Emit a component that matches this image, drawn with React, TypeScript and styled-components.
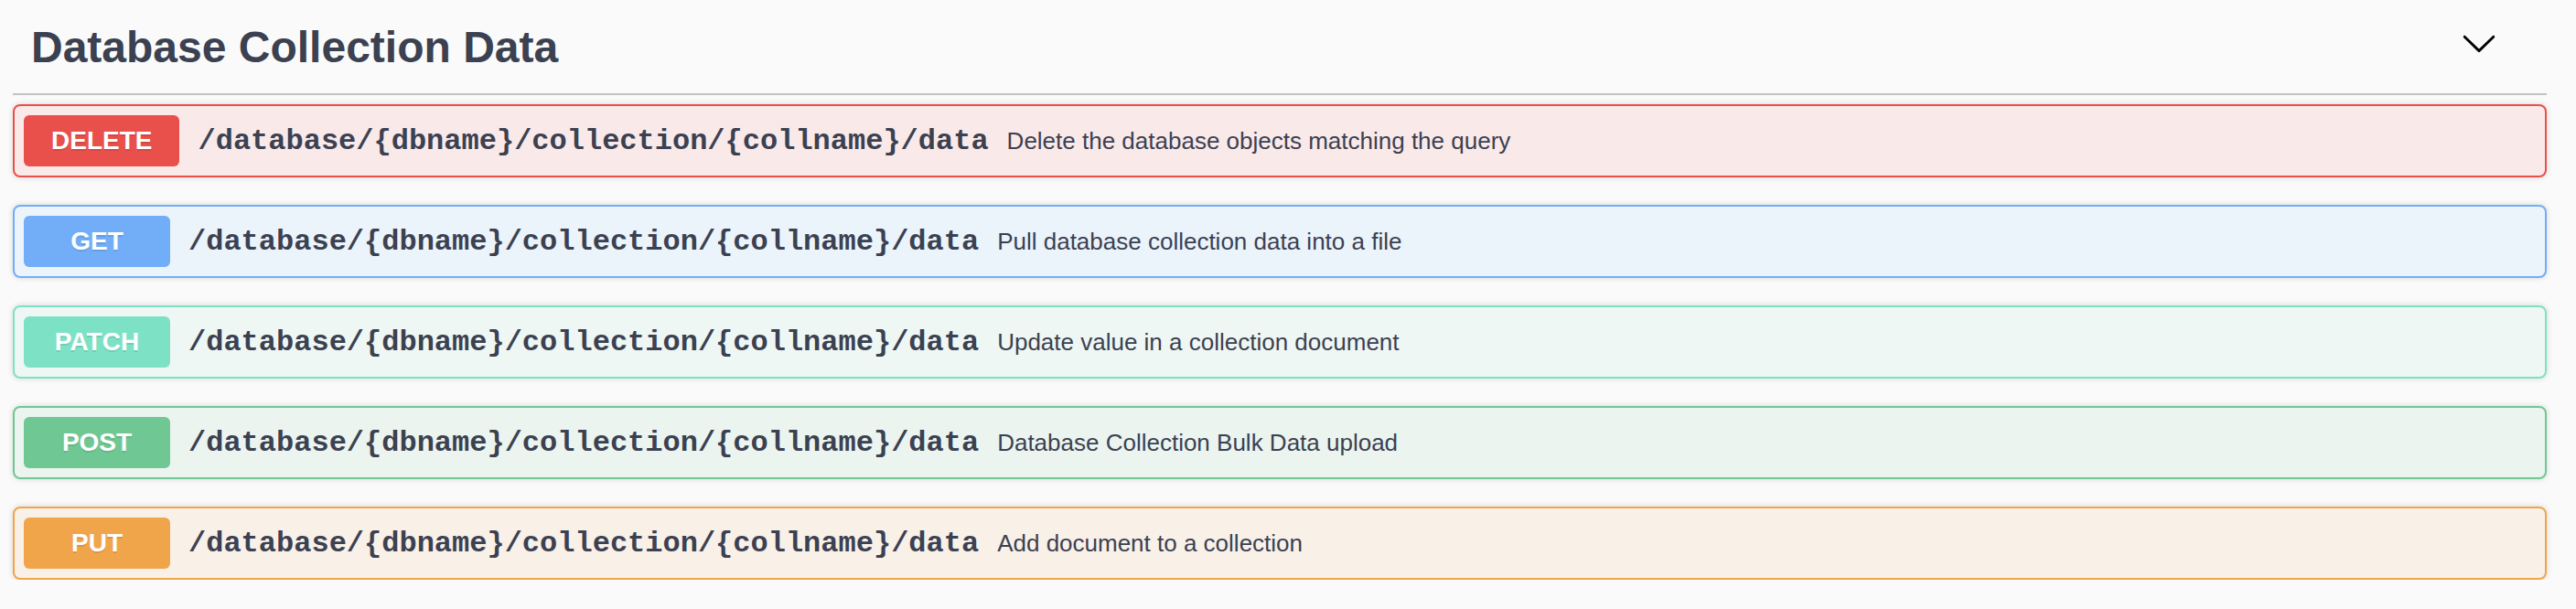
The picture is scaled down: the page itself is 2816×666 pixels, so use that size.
import React from "react";
import styled, { createGlobalStyle } from "styled-components";

const Global = createGlobalStyle`
  html, body { margin: 0; padding: 0; background: #fafafa; }
  body { font-family: "Liberation Sans", Arial, sans-serif; color: #3b4151; }
`;

type Method = "delete" | "get" | "patch" | "post" | "put";

const palette: Record<Method, { main: string; bg: string }> = {
  delete: { main: "#e9504b", bg: "#f9e9e9" },
  get: { main: "#72aef8", bg: "#ebf3fb" },
  patch: { main: "#7de2c5", bg: "#eef7f3" },
  post: { main: "#6fc893", bg: "#ebf4ef" },
  put: { main: "#f1a54b", bg: "#f9f0e8" },
};

const Section = styled.section`
  margin: 0 32px 0 14px;
  display: flex;
  flex-direction: column;
`;

const TagHeader = styled.div`
  box-sizing: border-box;
  height: 104px;
  display: flex;
  align-items: center;
  padding: 0 54px 0 20px;
  border-bottom: 2px solid rgba(59, 65, 81, 0.3);
  margin-bottom: 10px;
`;

const TagTitle = styled.h4`
  flex: 1;
  margin: 0;
  font-family: "Liberation Sans", Arial, sans-serif;
  font-size: 48px;
  font-weight: 700;
  color: #3b4151;
`;

const ExpandButton = styled.button`
  border: none;
  background: none;
  padding: 0;
  margin: 0 0 9px 0;
  width: 40px;
  height: 40px;
  display: flex;
  cursor: pointer;
`;

const OpList = styled.div`
  display: flex;
  flex-direction: column;
  gap: 30px;
`;

const OpBlock = styled.div<{ $m: Method }>`
  box-sizing: border-box;
  height: 80px;
  display: flex;
  align-items: center;
  padding: 0 10px;
  border: 2px solid ${(p) => palette[p.$m].main};
  background: ${(p) => palette[p.$m].bg};
  border-radius: 8px;
  box-shadow: 0 0 6px rgba(0, 0, 0, 0.15);
`;

const MethodBadge = styled.span<{ $m: Method }>`
  box-sizing: border-box;
  min-width: 160px;
  height: 56px;
  padding: 0 30px;
  display: flex;
  align-items: center;
  justify-content: center;
  background: ${(p) => palette[p.$m].main};
  color: #fff;
  border-radius: 6px;
  font-family: "Liberation Sans", Arial, sans-serif;
  font-size: 28px;
  font-weight: 700;
  text-shadow: 0 2px 0 rgba(0, 0, 0, 0.1);
`;

const PathText = styled.span`
  padding: 0 20px;
  font-family: "Liberation Mono", "Courier New", monospace;
  font-size: 32px;
  font-weight: 700;
  color: #3b4151;
`;

const Description = styled.span`
  flex: 1;
  font-family: "Liberation Sans", Arial, sans-serif;
  font-size: 26px;
  color: #3b4151;
`;

const ops: { m: Method; desc: string }[] = [
  { m: "delete", desc: "Delete the database objects matching the query" },
  { m: "get", desc: "Pull database collection data into a file" },
  { m: "patch", desc: "Update value in a collection document" },
  { m: "post", desc: "Database Collection Bulk Data upload" },
  { m: "put", desc: "Add document to a collection" },
];

export default function App() {
  return (
    <>
      <Global />
      <Section>
        <TagHeader>
          <TagTitle>Database Collection Data</TagTitle>
          <ExpandButton aria-label="collapse">
            <svg width="40" height="40" viewBox="0 0 20 20">
              <path
                fill="#000"
                d="M17.418 6.109c.272-.268.709-.268.979 0s.271.701 0 .969l-7.908 7.83c-.27.268-.707.268-.979 0l-7.908-7.830c-.27-.268-.27-.701 0-.969.271-.268.709-.268.979 0L10 13.25l7.418-7.141z"
              />
            </svg>
          </ExpandButton>
        </TagHeader>
        <OpList>
          {ops.map((o) => (
            <OpBlock key={o.m} $m={o.m}>
              <MethodBadge $m={o.m}>{o.m.toUpperCase()}</MethodBadge>
              <PathText>/database/{"{dbname}"}/collection/{"{collname}"}/data</PathText>
              <Description>{o.desc}</Description>
            </OpBlock>
          ))}
        </OpList>
      </Section>
    </>
  );
}
